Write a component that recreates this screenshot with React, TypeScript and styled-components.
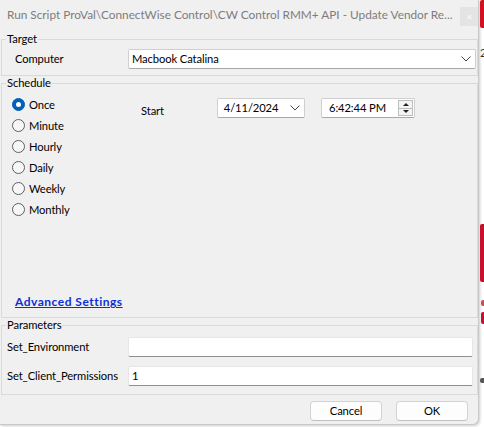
import styled, { createGlobalStyle } from "styled-components"

const GlobalStyle = createGlobalStyle`
  html, body {
    margin: 0;
    padding: 0;
    background: #fff;
  }
  body {
    font-family: Lato, "Noto Sans", sans-serif;
    font-size: 11.2px;
    letter-spacing: -0.1px;
    line-height: 14px;
    color: #000;
  }
`

const Desktop = styled.div`
  display: flex;
  width: 484px;
  height: 427px;
  overflow: hidden;
  background: #fff;
`

const Window = styled.div`
  width: 479px;
  height: 425px;
  flex-shrink: 0;
  box-sizing: border-box;
  display: flex;
  flex-direction: column;
  background: #f0f0f0;
  border-right: 1px solid #c9c9c9;
  border-bottom: 1px solid #c9c9c9;
  border-bottom-right-radius: 6px;
  box-shadow: 1px 1px 3px rgba(0, 0, 0, 0.2);
`

const TitleBar = styled.div`
  height: 32px;
  flex-shrink: 0;
  display: flex;
  align-items: flex-start;
  padding-left: 7px;
  gap: 2px;
`

const Title = styled.div`
  flex: 1;
  min-width: 0;
  margin-top: 8px;
  white-space: nowrap;
  overflow: hidden;
  color: #7d7d7d;
  font-size: 11.8px;
  letter-spacing: 0;
`

const CloseButton = styled.div`
  width: 18px;
  height: 19px;
  margin-top: 7px;
  background: #e4e4e4;
  color: #f8f8f8;
  font-size: 8px;
  display: flex;
  align-items: center;
  justify-content: center;
`

const Group = styled.fieldset`
  margin: 0 0 0 1px;
  padding: 0;
  min-width: 0;
  border: 1px solid #dadada;
`

const Legend = styled.legend`
  margin-left: 4px;
  padding: 0 1px;
  line-height: 14px;
`

const FieldRow = styled.div<{ $labelWidth: number }>`
  display: grid;
  grid-template-columns: ${(p) => p.$labelWidth}px 1fr;
  align-items: center;
`

const TargetBody = styled.div`
  padding: 3px 1px 6px 13px;
`

const ComboBox = styled.div<{ $width?: number }>`
  height: 20px;
  box-sizing: border-box;
  ${(p) => (p.$width ? `width: ${p.$width}px;` : "")}
  display: flex;
  align-items: center;
  justify-content: space-between;
  padding: 0 4px 0 3px;
  background: #fff;
  border: 1px solid #cfcfcf;
  border-bottom-color: #a8a8a8;
  border-radius: 2px;
`

const ScheduleBody = styled.div`
  padding: 4px 0 8px 10px;
  display: flex;
  flex-direction: column;
`

const ScheduleTop = styled.div`
  display: flex;
`

const RadioList = styled.div`
  width: 129px;
  display: flex;
  flex-direction: column;
`

const RadioRow = styled.label`
  height: 21px;
  display: flex;
  align-items: center;
  gap: 4px;
`

const RadioDot = styled.span<{ $checked?: boolean }>`
  width: 13px;
  height: 13px;
  box-sizing: border-box;
  border-radius: 50%;
  flex-shrink: 0;
  display: flex;
  align-items: center;
  justify-content: center;
  background: ${(p) => (p.$checked ? "#005fb8" : "#f7f7f7")};
  border: 1px solid ${(p) => (p.$checked ? "#005fb8" : "#5f5f5f")};
  &::after {
    content: "";
    display: ${(p) => (p.$checked ? "block" : "none")};
    width: 5px;
    height: 5px;
    border-radius: 50%;
    background: #fff;
  }
`

const StartRow = styled.div`
  margin-top: 4px;
  display: flex;
  align-items: flex-start;
  height: 20px;
`

const StartLabel = styled.span`
  width: 76px;
  margin-top: 6px;
`

const TimeBox = styled.div`
  margin-left: 16px;
  width: 94px;
  height: 20px;
  box-sizing: border-box;
  display: flex;
  align-items: center;
  justify-content: space-between;
  padding: 0 1px 0 7px;
  background: #fff;
  border: 1px solid #cfcfcf;
  border-bottom-color: #a8a8a8;
  border-radius: 2px;
`

const Spin = styled.div`
  width: 15px;
  height: 16px;
  display: flex;
  flex-direction: column;
  border: 1px solid #bdbdbd;
  box-sizing: border-box;
  background: #f4f4f4;
`

const SpinHalf = styled.div<{ $down?: boolean }>`
  flex: 1;
  display: flex;
  align-items: center;
  justify-content: center;
  border-top: ${(p) => (p.$down ? "1px solid #bdbdbd" : "none")};
  &::after {
    content: "";
    width: 0;
    height: 0;
    border-left: 3px solid transparent;
    border-right: 3px solid transparent;
    ${(p) => (p.$down ? "border-top: 3px solid #222;" : "border-bottom: 3px solid #222;")}
  }
`

const AdvancedLink = styled.a`
  margin: 75px 0 0 3px;
  align-self: flex-start;
  font-size: 12px;
  font-weight: bold;
  letter-spacing: 0.5px;
  color: #0a2fd4;
  text-decoration: underline;
  cursor: pointer;
`

const ParamsBody = styled.div`
  padding: 5px 4px 8px 5px;
  display: flex;
  flex-direction: column;
  gap: 9px;
`

const TextBox = styled.div`
  height: 20px;
  box-sizing: border-box;
  padding: 0 3px;
  display: flex;
  align-items: center;
  background: #fff;
  border: 1px solid #e6e6e6;
  border-bottom-color: #8f8f8f;
  border-radius: 2px;
`

const Footer = styled.div`
  display: flex;
  justify-content: flex-end;
  gap: 14px;
  padding: 6px 10px 0 0;
`

const Button = styled.button`
  width: 72px;
  height: 20px;
  padding: 0;
  font: inherit;
  letter-spacing: inherit;
  color: #000;
  background: #fdfdfd;
  border: 1px solid #d2d2d2;
  border-bottom-color: #c0c0c0;
  border-radius: 4px;
`

const Strip = styled.div`
  flex: 1;
  display: flex;
  flex-direction: column;
  align-items: flex-end;
  overflow: hidden;
`

const StripBlock = styled.div<{ $top: number; $height: number; $color: string; $width: number }>`
  margin-top: ${(p) => p.$top}px;
  height: ${(p) => p.$height}px;
  width: ${(p) => p.$width}px;
  background: ${(p) => p.$color};
  border-radius: 2px 0 0 2px;
`

const StripDigit = styled.span`
  margin-top: 18px;
  width: 4px;
  overflow: hidden;
  color: #333;
`

const Chevron = () => (
  <svg width="10" height="6" viewBox="0 0 10 6">
    <polyline points="0.5,0.5 5,5 9.5,0.5" fill="none" stroke="#444" strokeWidth="1" />
  </svg>
)

const schedules = ["Once", "Minute", "Hourly", "Daily", "Weekly", "Monthly"]

export default function App() {
  return (
    <>
      <GlobalStyle />
      <Desktop>
        <Window>
          <TitleBar>
            <Title>Run Script ProVal\ConnectWise Control\CW Control RMM+ API - Update Vendor Re...</Title>
            <CloseButton>✕</CloseButton>
          </TitleBar>

          <Group>
            <Legend>Target</Legend>
            <TargetBody>
              <FieldRow $labelWidth={113}>
                <span>Computer</span>
                <ComboBox>
                  <span>Macbook Catalina</span>
                  <Chevron />
                </ComboBox>
              </FieldRow>
            </TargetBody>
          </Group>

          <Group>
            <Legend>Schedule</Legend>
            <ScheduleBody>
              <ScheduleTop>
                <RadioList>
                  {schedules.map((s, i) => (
                    <RadioRow key={s}>
                      <RadioDot $checked={i === 0} />
                      <span>{s}</span>
                    </RadioRow>
                  ))}
                </RadioList>
                <StartRow>
                  <StartLabel>Start</StartLabel>
                  <ComboBox $width={88}>
                    <span>&nbsp;4/11/2024</span>
                    <Chevron />
                  </ComboBox>
                  <TimeBox>
                    <span>6:42:44 PM</span>
                    <Spin>
                      <SpinHalf />
                      <SpinHalf $down />
                    </Spin>
                  </TimeBox>
                </StartRow>
              </ScheduleTop>
              <AdvancedLink>Advanced Settings</AdvancedLink>
            </ScheduleBody>
          </Group>

          <Group>
            <Legend>Parameters</Legend>
            <ParamsBody>
              <FieldRow $labelWidth={121}>
                <span>Set_Environment</span>
                <TextBox />
              </FieldRow>
              <FieldRow $labelWidth={121}>
                <span>Set_Client_Permissions</span>
                <TextBox>1</TextBox>
              </FieldRow>
            </ParamsBody>
          </Group>

          <Footer>
            <Button>Cancel</Button>
            <Button>OK</Button>
          </Footer>
        </Window>

        <Strip>
          <StripBlock $top={0} $height={28} $width={4} $color="#d3101f" />
          <StripDigit>2</StripDigit>
          <StripBlock $top={164} $height={58} $width={4} $color="#c8102e" />
          <StripBlock $top={18} $height={6} $width={3} $color="#d24a55" />
          <StripBlock $top={6} $height={12} $width={3} $color="#c8102e" />
          <StripBlock $top={54} $height={5} $width={4} $color="#555" />
        </Strip>
      </Desktop>
    </>
  )
}
